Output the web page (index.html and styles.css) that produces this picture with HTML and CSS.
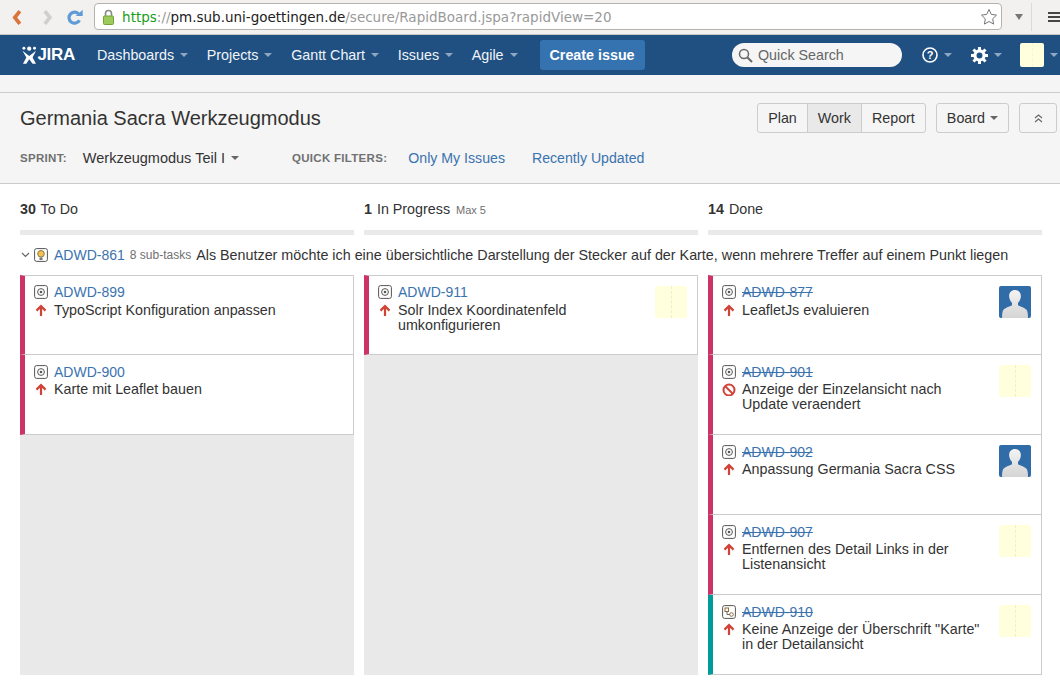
FILE: index.html
```html
<!DOCTYPE html>
<html lang="en">
<head>
    <meta charset="UTF-8">
    <title>Germania Sacra Werkzeugmodus - JIRA</title>
    <link rel="stylesheet" href="styles.css">
</head>
<body>
    <svg class="icon-defs" width="0" height="0">
        <defs>
            <symbol id="ico-task" viewBox="0 0 14 14">
                <rect x="0.6" y="0.6" width="12.8" height="12.8" rx="2" fill="#fff" stroke="#555"/>
                <circle cx="7" cy="7" r="3.4" fill="none" stroke="#555"/>
                <circle cx="7" cy="7" r="1.3" fill="#555"/>
            </symbol>
            <symbol id="ico-up" viewBox="0 0 14 14">
                <path d="M7 13V4M2.500 7.600L7 3.100l4.500 4.500" fill="none" stroke="#d04437" stroke-width="2.200"/>
            </symbol>
            <symbol id="ico-avatar" viewBox="0 0 32 32">
                <defs>
                    <linearGradient id="body-fade" x1="0" y1="0" x2="0" y2="1">
                        <stop offset="0" stop-color="#f4f4f4"/>
                        <stop offset="1" stop-color="#d4d4d4"/>
                    </linearGradient>
                </defs>
                <rect width="32" height="32" rx="2" fill="#2f6ca8"/>
                <path d="M16 4c-4 0-6.300 3-5.800 7 .3 2.500 1.300 4.500 2.800 5.700v2.500c-2 1.500-7.500 2.300-9 5.300-.6 1.200-1 4-1 7.500h26c0-3.500-.4-6.300-1-7.500-1.500-3-7-3.800-9-5.300v-2.500c1.500-1.200 2.500-3.200 2.800-5.700C22.300 7 20 4 16 4z" fill="url(#body-fade)"/>
            </symbol>
        </defs>
    </svg>

    <div class="browser-bar">
        <svg class="nav-ico nav-back" width="11" height="17" viewBox="0 0 11 17"><path d="M8.500 1.500L3 8.500l5.500 7" fill="none" stroke="#d9743c" stroke-width="4"/></svg>
        <svg class="nav-ico nav-fwd" width="10" height="17" viewBox="0 0 10 17"><path d="M2 1.500l5.500 7-5.500 7" fill="none" stroke="#cfcfcb" stroke-width="4"/></svg>
        <svg class="nav-ico nav-reload" width="17" height="17" viewBox="0 0 17 17"><path d="M13.500 11.500a6 6 0 1 1-1-7" fill="none" stroke="#5f9bd6" stroke-width="3.500"/><path d="M9.500 7H17V0z" fill="#5f9bd6"/></svg>
        <div class="url-box">
            <svg class="lock" width="11" height="16" viewBox="0 0 11 16"><path d="M2.500 7V4.500a3 3 0 0 1 6 0V7" fill="none" stroke="#8a8a8a" stroke-width="1.600"/><rect x="0.500" y="7" width="10" height="8.500" rx="1" fill="#9ccb5a" stroke="#76a23c"/></svg>
            <span class="url-text"><span class="url-green">https</span><span class="url-grey">://</span><span class="url-host">pm.sub.uni-goettingen.de</span><span class="url-grey">/secure/RapidBoard.jspa?rapidView=20</span></span>
            <svg class="star" width="18" height="18" viewBox="0 0 18 18"><path d="M9 1.500l2.300 4.900 5.200.7-3.800 3.700.9 5.300L9 13.500l-4.600 2.600.9-5.300L1.500 7.100l5.200-.7z" fill="#fff" stroke="#777"/></svg>
        </div>
        <span class="url-drop"></span>
        <span class="bar-sep"></span>
        <span class="burger"><i></i><i></i><i></i></span>
    </div>

    <header class="topnav">
        <a class="logo">
            <svg width="15" height="18" viewBox="0 0 15 18"><circle cx="2" cy="2" r="1.500" fill="#fff"/><circle cx="7.500" cy="2.500" r="2.200" fill="#fff"/><circle cx="13" cy="2" r="1.500" fill="#fff"/><path d="M0.500 4.500L7.500 10l7-5.500-3.500 7 3.500 6.500h-3.500L7.500 13.500 4.500 18H1l3.500-6.500z" fill="#fff"/></svg>
            <span>JIRA</span>
        </a>
        <nav class="nav-items">
            <a class="nav-item">Dashboards</a>
            <a class="nav-item">Projects</a>
            <a class="nav-item">Gantt Chart</a>
            <a class="nav-item">Issues</a>
            <a class="nav-item">Agile</a>
        </nav>
        <a class="create-btn">Create issue</a>
        <div class="nav-right">
            <div class="search">
                <svg width="15" height="15" viewBox="0 0 15 15"><circle cx="6" cy="6" r="4.500" fill="none" stroke="#666" stroke-width="1.500"/><path d="M9.500 9.500L14 14" stroke="#666" stroke-width="2"/></svg>
                <span>Quick Search</span>
            </div>
            <a class="nav-icon">
                <svg width="16" height="16" viewBox="0 0 16 16"><circle cx="8" cy="8" r="7" fill="none" stroke="#fff" stroke-width="1.600"/><text x="8" y="12" class="help-mark">?</text></svg>
            </a>
            <a class="nav-icon nav-gear">
                <svg width="17" height="17" viewBox="0 0 16 16"><circle cx="8" cy="8" r="4.300" fill="none" stroke="#fff" stroke-width="3"/><path d="M8 0v3M8 13v3M0 8h3M13 8h3M2.300 2.300l2.200 2.200M11.500 11.500l2.200 2.200M13.700 2.300l-2.200 2.200M4.500 11.500l-2.200 2.200" stroke="#fff" stroke-width="2.800"/></svg>
            </a>
            <a class="nav-icon nav-user"><span class="avatar-note"></span></a>
        </div>
    </header>

    <div class="strip"></div>

    <section class="board-head">
        <div class="head-row">
            <h1>Germania Sacra Werkzeugmodus</h1>
            <div class="head-tools">
                <div class="btn-group">
                    <a class="btn">Plan</a>
                    <a class="btn active">Work</a>
                    <a class="btn">Report</a>
                </div>
                <a class="btn solo caret">Board</a>
                <a class="btn solo collapse">
                    <svg width="9" height="9" viewBox="0 0 9 9"><path d="M1 4l3.500-3L8 4M1 8l3.500-3L8 8" fill="none" stroke="#666" stroke-width="1.200"/></svg>
                </a>
            </div>
        </div>
        <div class="filter-row">
            <span class="label">SPRINT:</span>
            <span class="sprint">Werkzeugmodus Teil I</span>
            <span class="label quick">QUICK FILTERS:</span>
            <a class="filter">Only My Issues</a>
            <a class="filter">Recently Updated</a>
        </div>
    </section>

    <main class="board">
        <div class="col-heads">
            <div class="col-head"><b>30</b> To Do</div>
            <div class="col-head"><b>1</b> In Progress <small>Max 5</small></div>
            <div class="col-head"><b>14</b> Done</div>
        </div>

        <div class="swimlane">
            <svg class="chev" width="9" height="6" viewBox="0 0 9 6"><path d="M1 1l3.500 3.500L8 1" fill="none" stroke="#666" stroke-width="1.200"/></svg>
            <svg class="story" width="14" height="14" viewBox="0 0 14 14"><rect x="0.600" y="0.600" width="12.800" height="12.800" rx="2" fill="#fff" stroke="#555"/><circle cx="7" cy="5.800" r="3.300" fill="#f2c14e" stroke="#8a7a45"/><rect x="5.500" y="9.500" width="3" height="2.500" fill="#777"/></svg>
            <a class="key">ADWD-861</a>
            <span class="subtasks">8 sub-tasks</span>
            <span class="summary">Als Benutzer möchte ich eine übersichtliche Darstellung der Stecker auf der Karte, wenn mehrere Treffer auf einem Punkt liegen</span>
        </div>

        <div class="columns">
            <div class="column">
                <div class="card">
                    <div class="card-key"><svg class="ico"><use href="#ico-task"/></svg><a class="key">ADWD-899</a></div>
                    <div class="card-text"><svg class="ico-pri"><use href="#ico-up"/></svg><p>TypoScript Konfiguration anpassen</p></div>
                </div>
                <div class="card">
                    <div class="card-key"><svg class="ico"><use href="#ico-task"/></svg><a class="key">ADWD-900</a></div>
                    <div class="card-text"><svg class="ico-pri"><use href="#ico-up"/></svg><p>Karte mit Leaflet bauen</p></div>
                </div>
            </div>

            <div class="column">
                <div class="card">
                    <div class="card-key"><svg class="ico"><use href="#ico-task"/></svg><a class="key">ADWD-911</a></div>
                    <div class="card-text"><svg class="ico-pri"><use href="#ico-up"/></svg><p>Solr Index Koordinatenfeld<br>umkonfigurieren</p></div>
                    <span class="assignee note"></span>
                </div>
            </div>

            <div class="column">
                <div class="card">
                    <div class="card-key"><svg class="ico"><use href="#ico-task"/></svg><a class="key done">ADWD-877</a></div>
                    <div class="card-text"><svg class="ico-pri"><use href="#ico-up"/></svg><p>LeafletJs evaluieren</p></div>
                    <svg class="assignee"><use href="#ico-avatar"/></svg>
                </div>
                <div class="card">
                    <div class="card-key"><svg class="ico"><use href="#ico-task"/></svg><a class="key done">ADWD-901</a></div>
                    <div class="card-text">
                        <svg class="ico-pri" viewBox="0 0 14 14"><circle cx="7" cy="8" r="5.500" fill="none" stroke="#d04437" stroke-width="2"/><path d="M3 4l8 8" stroke="#d04437" stroke-width="2"/></svg>
                        <p>Anzeige der Einzelansicht nach<br>Update veraendert</p>
                    </div>
                    <span class="assignee note"></span>
                </div>
                <div class="card">
                    <div class="card-key"><svg class="ico"><use href="#ico-task"/></svg><a class="key done">ADWD-902</a></div>
                    <div class="card-text"><svg class="ico-pri"><use href="#ico-up"/></svg><p>Anpassung Germania Sacra CSS</p></div>
                    <svg class="assignee"><use href="#ico-avatar"/></svg>
                </div>
                <div class="card">
                    <div class="card-key"><svg class="ico"><use href="#ico-task"/></svg><a class="key done">ADWD-907</a></div>
                    <div class="card-text"><svg class="ico-pri"><use href="#ico-up"/></svg><p>Entfernen des Detail Links in der<br>Listenansicht</p></div>
                    <span class="assignee note"></span>
                </div>
                <div class="card teal">
                    <div class="card-key">
                        <svg class="ico" viewBox="0 0 14 14"><rect x="0.600" y="0.600" width="12.800" height="12.800" rx="2" fill="#fff" stroke="#555"/><rect x="3" y="3" width="3.500" height="3.500" fill="none" stroke="#8a6d3b"/><circle cx="9.500" cy="9.500" r="1.800" fill="none" stroke="#8a6d3b"/><path d="M5 6.500v3h2.700" fill="none" stroke="#666"/></svg>
                        <a class="key done">ADWD-910</a>
                    </div>
                    <div class="card-text"><svg class="ico-pri"><use href="#ico-up"/></svg><p>Keine Anzeige der Überschrift "Karte"<br>in der Detailansicht</p></div>
                    <span class="assignee note"></span>
                </div>
            </div>
        </div>
    </main>
</body>
</html>
```

FILE: styles.css
```css
html, body {
    margin: 0;
    height: 685px;
    overflow: hidden;
}

body {
    background-color: #fff;
    color: #333;
    font-family: "Liberation Sans", Arial, sans-serif;
    font-size: 14.3px;
}

.icon-defs {
    display: block;
    height: 0;
}

/* Browser toolbar */
.browser-bar {
    display: flex;
    align-items: center;
    height: 34px;
    padding-left: 12px;
    background-color: #f2f1f0;
    border-bottom: 1px solid #c8c6c3;
}

.nav-fwd {
    margin-left: 21px;
}

.nav-reload {
    margin-left: 15px;
}

.url-box {
    display: flex;
    align-items: center;
    flex: none;
    box-sizing: border-box;
    width: 908px;
    height: 27px;
    margin-left: 11px;
    margin-top: -1px;
    padding: 0 3px 0 8px;
    background-color: #fff;
    border: 1px solid #b5b3b0;
    border-radius: 4px;
}

.url-text {
    flex: 1;
    margin-left: 8px;
    font-family: "DejaVu Sans", sans-serif;
    font-size: 13.5px;
    white-space: nowrap;
}

.url-green {
    color: #1a9c1a;
}

.url-grey {
    color: #999;
}

.url-host {
    color: #222;
}

.url-drop {
    width: 0;
    height: 0;
    margin-left: 13px;
    border-left: 4px solid transparent;
    border-right: 4px solid transparent;
    border-top: 6px solid #777;
}

.bar-sep {
    width: 1px;
    height: 28px;
    margin-left: 8px;
    background-color: #dcdad7;
}

.burger {
    display: flex;
    flex-direction: column;
    gap: 2px;
    margin-left: 16px;
}

.burger i {
    display: block;
    width: 12px;
    height: 2px;
    background-color: #444;
}

/* JIRA header */
.topnav {
    display: flex;
    align-items: center;
    height: 40px;
    padding-left: 22px;
    background-color: #205081;
    color: #fff;
}

.logo {
    display: flex;
    align-items: center;
    gap: 1px;
    width: 53px;
    font-weight: bold;
    font-size: 17px;
    letter-spacing: -0.3px;
}

.nav-items {
    display: flex;
    gap: 18.7px;
    margin-left: 22px;
}

.nav-item {
    display: flex;
    align-items: center;
    color: #f0f4f8;
}

.nav-item::after,
.nav-icon::after {
    content: "";
    width: 0;
    height: 0;
    margin-left: 6px;
    border-left: 4px solid transparent;
    border-right: 4px solid transparent;
    border-top: 4px solid #8fa8c2;
}

.create-btn {
    display: flex;
    align-items: center;
    height: 30px;
    margin-left: 22px;
    padding: 0 10px;
    background-color: #3572b0;
    border-radius: 3px;
    font-weight: bold;
}

.nav-right {
    display: flex;
    align-items: center;
    margin-left: auto;
}

.search {
    display: flex;
    align-items: center;
    gap: 5px;
    box-sizing: border-box;
    width: 170px;
    height: 24px;
    margin-right: 20px;
    padding-left: 6px;
    background-color: #f5f5f5;
    border-radius: 12px;
    color: #666;
}

.nav-icon {
    display: flex;
    align-items: center;
    margin-right: 19px;
}

.nav-gear {
    margin-right: 18px;
}

.help-mark {
    fill: #fff;
    font-size: 11px;
    font-weight: bold;
    text-anchor: middle;
}

.nav-user {
    margin-right: 2px;
}

.avatar-note {
    display: block;
    width: 24px;
    height: 24px;
    background-color: #ffffdd;
    border-radius: 2px;
}

.strip {
    box-sizing: border-box;
    height: 18px;
    background-color: #f5f5f5;
    border-bottom: 1px solid #ccc;
}

/* Board header */
.board-head {
    box-sizing: border-box;
    height: 91px;
    padding: 10px 20px 0;
    background-color: #f5f5f5;
    border-bottom: 1px solid #ccc;
}

.head-row {
    display: flex;
    align-items: center;
    justify-content: space-between;
}

h1 {
    margin: 0;
    font-size: 20px;
    font-weight: normal;
}

.head-tools {
    display: flex;
    gap: 10px;
    margin-right: -17px;
}

.btn-group {
    display: flex;
}

.btn {
    display: flex;
    align-items: center;
    justify-content: center;
    box-sizing: border-box;
    height: 30px;
    padding: 0 10px;
    background-color: #f5f5f5;
    border: 1px solid #ccc;
    margin-left: -1px;
}

.btn-group .btn:first-child {
    border-radius: 3px 0 0 3px;
}

.btn-group .btn:last-child {
    border-radius: 0 3px 3px 0;
}

.btn.active {
    background-color: #e9e9e9;
}

.btn.solo {
    margin-left: 0;
    border-radius: 3px;
}

.caret::after {
    content: "";
    width: 0;
    height: 0;
    margin-left: 5px;
    border-left: 4px solid transparent;
    border-right: 4px solid transparent;
    border-top: 4px solid #666;
}

.collapse {
    width: 38px;
}

.filter-row {
    display: flex;
    align-items: center;
    margin-top: 17px;
}

.label {
    color: #707070;
    font-size: 11.5px;
    font-weight: bold;
    letter-spacing: 0.3px;
}

.sprint {
    display: flex;
    align-items: center;
    margin-left: 16px;
    font-size: 14.5px;
}

.sprint::after {
    content: "";
    width: 0;
    height: 0;
    margin-left: 6px;
    border-left: 4px solid transparent;
    border-right: 4px solid transparent;
    border-top: 4px solid #666;
}

.quick {
    margin-left: 53px;
}

.filter {
    margin-left: 21px;
    color: #3b73af;
    font-size: 14.15px;
}

.filter + .filter {
    margin-left: 27px;
}

/* Board */
.board {
    padding: 0 18px 0 20px;
}

.col-heads {
    display: grid;
    grid-template-columns: repeat(3, 334px);
    gap: 10px;
    padding-top: 17px;
}

.col-head {
    box-sizing: border-box;
    height: 34px;
    border-bottom: 5px solid #e9e9e9;
}

.col-head b {
    margin-right: 1px;
}

.col-head small {
    margin-left: 2px;
    color: #707070;
    font-size: 11px;
}

.swimlane {
    display: flex;
    align-items: center;
    height: 40px;
    white-space: nowrap;
}

.chev {
    margin-left: 1px;
    margin-right: 4px;
}

.story {
    margin-right: 6px;
}

.subtasks {
    margin: 0 5px;
    color: #707070;
    font-size: 12px;
}

.summary {
    font-size: 14.33px;
}

.key {
    color: #3b73af;
    font-size: 14px;
}

.key.done {
    text-decoration: line-through;
}

.columns {
    display: grid;
    grid-template-columns: repeat(3, 334px);
    gap: 10px;
}

.column {
    display: flex;
    flex-direction: column;
    height: 400px;
    background-color: #e9e9e9;
}

.card {
    position: relative;
    box-sizing: border-box;
    height: 80px;
    padding: 9px 10px 0 9px;
    background-color: #fff;
    border: 1px solid #ccc;
    border-left: 5px solid #cd3268;
    border-top-width: 0;
}

.card:first-child {
    padding-top: 8px;
    border-top-width: 1px;
}

.card.teal {
    border-left-color: #009a9a;
}

.card-key {
    display: flex;
    align-items: center;
    gap: 6px;
    height: 16px;
}

.ico {
    width: 14px;
    height: 14px;
}

.card-text {
    display: flex;
    gap: 6px;
    margin-top: 2px;
    line-height: 15px;
}

.card:first-child .card-text {
    margin-top: 3px;
}

.card-text p {
    margin: 0;
}

.ico-pri {
    flex: none;
    width: 14px;
    height: 14px;
}

/* Assignee sits over the card corner */
.assignee {
    position: absolute;
    top: 10px;
    right: 10px;
    width: 32px;
    height: 32px;
}

.assignee.note {
    background-color: #ffffdd;
    border-radius: 2px;
}

.assignee.note::after,
.avatar-note::after {
    content: "";
    display: block;
    width: 50%;
    height: 100%;
    border-right: 1px dashed #eeeec8;
}

.avatar-note::after {
    border-right-color: #f4f4d8;
}
```
